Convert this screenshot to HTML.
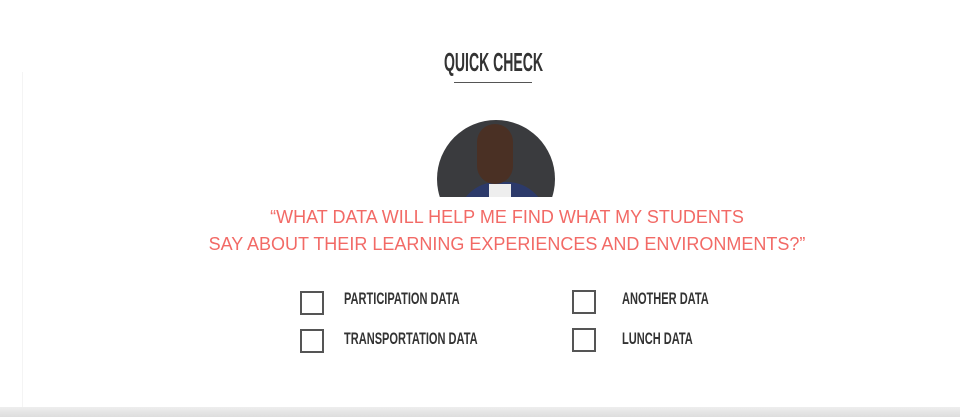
<!DOCTYPE html>
<html><head><style>
body{margin:0;width:960px;height:417px;background:#fff;position:relative;overflow:hidden;font-family:"Liberation Sans",sans-serif}
.t{position:absolute;color:#333;font-weight:bold}
.cb{position:absolute;width:20px;height:20px;border:2px solid #555;box-sizing:content-box}
.lbl{position:absolute;font-size:17px;color:#333;font-weight:bold;transform:scaleX(.65);transform-origin:left}
.q{position:absolute;left:0;width:1014px;text-align:center;color:#f26a66;font-size:18px;letter-spacing:0px}
</style></head><body>
<div style="position:absolute;left:22px;top:72px;width:1px;height:336px;background:#f4f4f4"></div>
<div style="position:absolute;left:0;top:407px;width:960px;height:10px;background:linear-gradient(#eee,#ddd)"></div>
<div class="t" style="left:444px;top:47px;font-size:26px;transform:scaleX(.54);transform-origin:left">QUICK CHECK</div>
<div style="position:absolute;left:454px;top:82px;width:78px;height:1px;background:#555"></div>
<div style="position:absolute;left:437px;top:120px;width:118px;height:77px;overflow:hidden">
<div style="width:118px;height:118px;border-radius:50%;background:#3a3b3e;position:relative;overflow:hidden">
<div style="position:absolute;left:20px;top:62px;width:90px;height:60px;border-radius:40px 40px 0 0;background:#2c3a6a"></div>
<div style="position:absolute;left:52px;top:64px;width:22px;height:20px;background:#eee"></div>
<div style="position:absolute;left:40px;top:4px;width:36px;height:60px;border-radius:18px;background:#4a3024"></div>
</div></div>
<div class="q" style="top:207px">“WHAT DATA WILL HELP ME FIND WHAT MY STUDENTS</div>
<div class="q" style="top:234px">SAY ABOUT THEIR LEARNING EXPERIENCES AND ENVIRONMENTS?”</div>
<div class="cb" style="left:300px;top:291px"></div>
<div class="cb" style="left:300px;top:329px"></div>
<div class="cb" style="left:572px;top:290px"></div>
<div class="cb" style="left:572px;top:328px"></div>
<div class="lbl" style="left:344px;top:289px">PARTICIPATION DATA</div>
<div class="lbl" style="left:344px;top:329px">TRANSPORTATION DATA</div>
<div class="lbl" style="left:622px;top:289px">ANOTHER DATA</div>
<div class="lbl" style="left:622px;top:329px">LUNCH DATA</div>
</body></html>
